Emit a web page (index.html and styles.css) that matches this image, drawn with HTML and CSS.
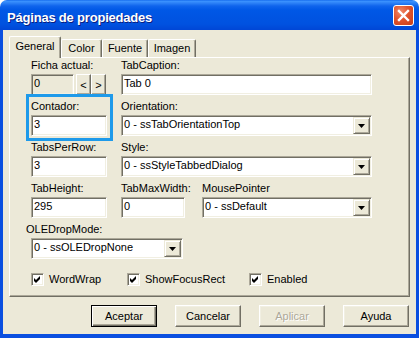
FILE: index.html
```html
<!DOCTYPE html>
<html lang="es">
<head>
<meta charset="utf-8">
<title>Páginas de propiedades</title>
<link rel="stylesheet" href="styles.css">
</head>
<body>
<div class="window">
  <div class="titlebar">
    <div class="title">Páginas de propiedades</div>
    <div class="close">
      <svg width="13" height="13" viewBox="0 0 13 13"><path d="M2 2 L11 11 M11 2 L2 11" stroke="#fff" stroke-width="2.4" stroke-linecap="square"/></svg>
    </div>
  </div>
  <div class="frame">
    <div class="tabs">
      <div class="tab active w-general">General</div>
      <div class="tab w-color">Color</div>
      <div class="tab w-fuente">Fuente</div>
      <div class="tab w-imagen">Imagen</div>
    </div>
    <div class="panel">
      <div class="form">
        <div class="cell">
          <div class="label">Ficha actual:</div>
          <div class="pager">
            <div class="field disabled w-pager">0</div>
            <div class="mini first">&lt;</div>
            <div class="mini">&gt;</div>
          </div>
        </div>
        <div class="cell">
          <div class="label">TabCaption:</div>
          <div class="field">Tab 0</div>
        </div>
        <div class="cell">
          <div class="label">Contador:</div>
          <div class="field">3</div>
        </div>
        <div class="cell">
          <div class="label">Orientation:</div>
          <div class="combo"><span class="combo-text">0 - ssTabOrientationTop</span><span class="arrow"><svg width="7" height="4" viewBox="0 0 7 4"><path d="M0 0H7L3.5 4Z" fill="#000"/></svg></span></div>
        </div>
        <div class="cell">
          <div class="label">TabsPerRow:</div>
          <div class="field">3</div>
        </div>
        <div class="cell">
          <div class="label">Style:</div>
          <div class="combo"><span class="combo-text">0 - ssStyleTabbedDialog</span><span class="arrow"><svg width="7" height="4" viewBox="0 0 7 4"><path d="M0 0H7L3.5 4Z" fill="#000"/></svg></span></div>
        </div>
        <div class="cell">
          <div class="label">TabHeight:</div>
          <div class="field">295</div>
        </div>
        <div class="cell split">
          <div class="sub w-maxwidth">
            <div class="label">TabMaxWidth:</div>
            <div class="field">0</div>
          </div>
          <div class="sub grow">
            <div class="label">MousePointer</div>
            <div class="combo"><span class="combo-text">0 - ssDefault</span><span class="arrow"><svg width="7" height="4" viewBox="0 0 7 4"><path d="M0 0H7L3.5 4Z" fill="#000"/></svg></span></div>
          </div>
        </div>
        <div class="cell wide">
          <div class="label shifted">OLEDropMode:</div>
          <div class="combo w-ole"><span class="combo-text">0 - ssOLEDropNone</span><span class="arrow"><svg width="7" height="4" viewBox="0 0 7 4"><path d="M0 0H7L3.5 4Z" fill="#000"/></svg></span></div>
        </div>
      </div>
      <div class="checks">
        <div class="check"><span class="box"><svg width="7" height="7" viewBox="0 0 7 7"><path d="M0 2L2 4L6 0V3L2 7L0 5Z" fill="#000"/></svg></span>WordWrap</div>
        <div class="check"><span class="box"><svg width="7" height="7" viewBox="0 0 7 7"><path d="M0 2L2 4L6 0V3L2 7L0 5Z" fill="#000"/></svg></span>ShowFocusRect</div>
        <div class="check"><span class="box"><svg width="7" height="7" viewBox="0 0 7 7"><path d="M0 2L2 4L6 0V3L2 7L0 5Z" fill="#000"/></svg></span>Enabled</div>
      </div>
      <div class="focus-ring"></div>
    </div>
    <div class="actions">
      <button class="btn default">Aceptar</button>
      <button class="btn">Cancelar</button>
      <button class="btn disabled-btn">Aplicar</button>
      <button class="btn">Ayuda</button>
    </div>
  </div>
</div>
</body>
</html>
```

FILE: styles.css
```css
html, body {
  margin: 0;
  padding: 0;
  background: #ffffff;
}

body {
  font-family: "Liberation Sans", Arial, sans-serif;
  font-size: 11px;
  color: #000;
}

.window {
  width: 419px;
  height: 338px;
  display: flex;
  flex-direction: column;
}

.titlebar {
  height: 30px;
  flex: none;
  display: flex;
  align-items: flex-start;
  justify-content: space-between;
  padding: 0 5px 0 7px;
  border-radius: 7px 7px 0 0;
  background: linear-gradient(to bottom,
    #0a5fe8 0px, #3d95ff 1px, #2d82f7 3px, #0f64ec 6px,
    #0058e6 10px, #0055e3 50%, #0052e0 80%, #0046d6 100%);
  box-sizing: border-box;
}

.title {
  padding-top: 10px;
  line-height: 15px;
  font-size: 13px;
  font-weight: bold;
  letter-spacing: -0.2px;
  color: #fff;
  text-shadow: 1px 1px 0 #0a1e7f;
  white-space: nowrap;
}

.close {
  margin-top: 5px;
  width: 21px;
  height: 21px;
  box-sizing: border-box;
  border: 1px solid #fff;
  border-radius: 3px;
  background: radial-gradient(circle at 35% 30%, #f08a6a 0%, #e0542e 45%, #c83d16 100%);
  display: flex;
  align-items: center;
  justify-content: center;
}

.frame {
  flex: 1;
  display: flex;
  flex-direction: column;
  background: #ece9d8;
  border-style: solid;
  border-color: #0a4fe0;
  border-width: 0 3px 4px 3px;
  padding: 6px 6px 7px 6px;
}

/* Tabs */
.tabs {
  height: 21px;
  display: flex;
  align-items: flex-end;
  position: relative;
  z-index: 1;
}

.tab {
  height: 18px;
  box-sizing: border-box;
  border: 1px solid;
  border-color: #fff #716f64 transparent #fff;
  border-bottom: none;
  border-radius: 2px 2px 0 0;
  box-shadow: inset -1px 0 0 #aca899;
  text-align: center;
  padding-top: 2px;
  line-height: 13px;
  white-space: nowrap;
  background: #ece9d8;
}

.tab.active {
  height: 22px;
  margin-bottom: -1px;
  padding-top: 3px;
}

.w-general { width: 52px; }
.w-color { width: 41px; }
.w-fuente { width: 46px; }
.w-imagen { width: 48px; }

/* Panel */
.panel {
  height: 240px;
  flex: none;
  box-sizing: border-box;
  border: 1px solid;
  border-color: #fff #716f64 #716f64 #fff;
  box-shadow: inset -1px -1px 0 #aca899;
  padding: 1px 0 0 21px;
  position: relative;
}

.form {
  display: grid;
  grid-template-columns: 76px 251px;
  column-gap: 14px;
  row-gap: 5px;
}

.wide {
  grid-column: 1 / span 2;
}

.label {
  line-height: 13px;
  margin-bottom: 2px;
  white-space: nowrap;
}

.label.shifted {
  margin-left: -5px;
}

.split {
  display: flex;
  gap: 17px;
}

.w-maxwidth { width: 64px; }
.sub.grow { flex: 1; }

.field {
  height: 21px;
  box-sizing: border-box;
  border: 1px solid;
  border-color: #aca899 #fff #fff #aca899;
  box-shadow: inset 1px 1px 0 #716f64, inset -1px -1px 0 #f1efe2;
  background: #fff;
  padding: 1px 2px 3px 2px;
  line-height: 15px;
  white-space: nowrap;
}

.field.disabled {
  background: #ece9d8;
}

.pager {
  display: flex;
}

.w-pager { width: 43px; }

.mini {
  width: 15px;
  height: 21px;
  box-sizing: border-box;
  border: 1px solid;
  border-color: #fff #716f64 #716f64 #fff;
  box-shadow: inset -1px -1px 0 #aca899;
  background: #ece9d8;
  text-align: center;
  line-height: 21px;
  font-size: 11px;
}

.mini.first {
  margin-left: 2px;
}

.combo {
  height: 21px;
  box-sizing: border-box;
  border: 1px solid;
  border-color: #aca899 #fff #fff #aca899;
  box-shadow: inset 1px 1px 0 #716f64, inset -1px -1px 0 #f1efe2;
  background: #fff;
  padding: 1px;
  display: flex;
}

.w-ole { width: 152px; }

.combo-text {
  flex: 1;
  padding-left: 1px;
  line-height: 15px;
  white-space: nowrap;
  overflow: hidden;
}

.arrow {
  width: 17px;
  height: 17px;
  flex: none;
  box-sizing: border-box;
  border: 1px solid;
  border-color: #ece9d8 #716f64 #716f64 #ece9d8;
  box-shadow: inset 1px 1px 0 #fff, inset -1px -1px 0 #aca899;
  background: #ece9d8;
  display: flex;
  align-items: center;
  justify-content: center;
}

/* Checkboxes */
.checks {
  display: grid;
  grid-template-columns: 96px 122px auto;
  margin-top: 14px;
}

.check {
  display: flex;
  align-items: center;
  gap: 5px;
  line-height: 13px;
  white-space: nowrap;
}

.box {
  width: 13px;
  height: 13px;
  box-sizing: border-box;
  border: 1px solid;
  border-color: #aca899 #fff #fff #aca899;
  box-shadow: inset 1px 1px 0 #716f64, inset -1px -1px 0 #f1efe2;
  background: #fff;
  display: flex;
  align-items: center;
  justify-content: center;
}

.focus-ring {
  position: absolute;
  left: 16px;
  top: 36px;
  width: 87px;
  height: 47px;
  box-sizing: border-box;
  border: 3px solid #1e9aea;
  pointer-events: none;
}

/* Buttons */
.actions {
  display: flex;
  justify-content: flex-end;
  gap: 18px;
  margin-top: 8px;
  padding-right: 1px;
}

.btn {
  width: 66px;
  height: 22px;
  box-sizing: border-box;
  border: 1px solid;
  border-color: #fff #716f64 #716f64 #fff;
  box-shadow: inset -1px -1px 0 #aca899, inset 1px 1px 0 #f1efe2;
  background: #ece9d8;
  font-family: inherit;
  font-size: 11px;
  color: #000;
  padding: 0;
  line-height: 20px;
  text-align: center;
  border-radius: 0;
}

.btn.default {
  border-color: #000;
  box-shadow: inset 1px 1px 0 #fff, inset -1px -1px 0 #716f64, inset -2px -2px 0 #aca899;
}

.btn.disabled-btn {
  color: #aca899;
  text-shadow: 1px 1px 0 #fff;
}
```
